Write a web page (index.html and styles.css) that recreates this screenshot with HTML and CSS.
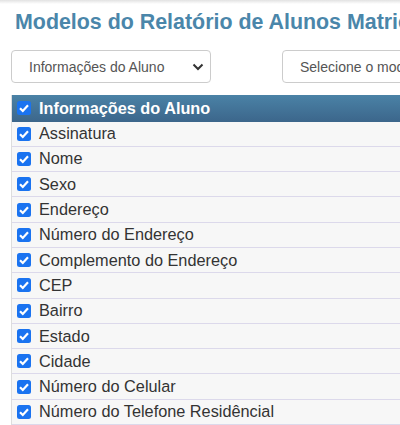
FILE: index.html
```html
<!DOCTYPE html>
<html lang="pt-BR">
<head>
<meta charset="utf-8">
<link rel="stylesheet" href="styles.css">
</head>
<body>
<div class="topshadow"></div>
<main class="page">
  <h1 class="title">Modelos do Relatório de Alunos Matriculados</h1>
  <div class="filters">
    <div class="select sel-a"><span>Informações do Aluno</span>
      <svg width="12" height="8" viewBox="0 0 12 8"><path d="M1.5 1.5 L6 6 L10.5 1.5" fill="none" stroke="#333" stroke-width="2"/></svg>
    </div>
    <div class="select sel-b"><span>Selecione o modelo</span>
      <svg width="12" height="8" viewBox="0 0 12 8"><path d="M1.5 1.5 L6 6 L10.5 1.5" fill="none" stroke="#333" stroke-width="2"/></svg>
    </div>
  </div>
  <div class="table">
    <div class="head"><svg class="cb" viewBox="0 0 14 14"><rect x="0" y="0" width="14" height="14" rx="2.5" fill="#1a73f0"/><path d="M3 7.2 L5.8 10 L11 4.2" fill="none" stroke="#fff" stroke-width="2.2"/></svg><span>Informações do Aluno</span></div>
    <div class="row"><svg class="cb" viewBox="0 0 14 14"><rect x="0" y="0" width="14" height="14" rx="2.5" fill="#1a73f0"/><path d="M3 7.2 L5.8 10 L11 4.2" fill="none" stroke="#fff" stroke-width="2.2"/></svg><span>Assinatura</span></div>
    <div class="row"><svg class="cb" viewBox="0 0 14 14"><rect x="0" y="0" width="14" height="14" rx="2.5" fill="#1a73f0"/><path d="M3 7.2 L5.8 10 L11 4.2" fill="none" stroke="#fff" stroke-width="2.2"/></svg><span>Nome</span></div>
    <div class="row"><svg class="cb" viewBox="0 0 14 14"><rect x="0" y="0" width="14" height="14" rx="2.5" fill="#1a73f0"/><path d="M3 7.2 L5.8 10 L11 4.2" fill="none" stroke="#fff" stroke-width="2.2"/></svg><span>Sexo</span></div>
    <div class="row"><svg class="cb" viewBox="0 0 14 14"><rect x="0" y="0" width="14" height="14" rx="2.5" fill="#1a73f0"/><path d="M3 7.2 L5.8 10 L11 4.2" fill="none" stroke="#fff" stroke-width="2.2"/></svg><span>Endereço</span></div>
    <div class="row"><svg class="cb" viewBox="0 0 14 14"><rect x="0" y="0" width="14" height="14" rx="2.5" fill="#1a73f0"/><path d="M3 7.2 L5.8 10 L11 4.2" fill="none" stroke="#fff" stroke-width="2.2"/></svg><span>Número do Endereço</span></div>
    <div class="row"><svg class="cb" viewBox="0 0 14 14"><rect x="0" y="0" width="14" height="14" rx="2.5" fill="#1a73f0"/><path d="M3 7.2 L5.8 10 L11 4.2" fill="none" stroke="#fff" stroke-width="2.2"/></svg><span>Complemento do Endereço</span></div>
    <div class="row"><svg class="cb" viewBox="0 0 14 14"><rect x="0" y="0" width="14" height="14" rx="2.5" fill="#1a73f0"/><path d="M3 7.2 L5.8 10 L11 4.2" fill="none" stroke="#fff" stroke-width="2.2"/></svg><span>CEP</span></div>
    <div class="row"><svg class="cb" viewBox="0 0 14 14"><rect x="0" y="0" width="14" height="14" rx="2.5" fill="#1a73f0"/><path d="M3 7.2 L5.8 10 L11 4.2" fill="none" stroke="#fff" stroke-width="2.2"/></svg><span>Bairro</span></div>
    <div class="row"><svg class="cb" viewBox="0 0 14 14"><rect x="0" y="0" width="14" height="14" rx="2.5" fill="#1a73f0"/><path d="M3 7.2 L5.8 10 L11 4.2" fill="none" stroke="#fff" stroke-width="2.2"/></svg><span>Estado</span></div>
    <div class="row"><svg class="cb" viewBox="0 0 14 14"><rect x="0" y="0" width="14" height="14" rx="2.5" fill="#1a73f0"/><path d="M3 7.2 L5.8 10 L11 4.2" fill="none" stroke="#fff" stroke-width="2.2"/></svg><span>Cidade</span></div>
    <div class="row"><svg class="cb" viewBox="0 0 14 14"><rect x="0" y="0" width="14" height="14" rx="2.5" fill="#1a73f0"/><path d="M3 7.2 L5.8 10 L11 4.2" fill="none" stroke="#fff" stroke-width="2.2"/></svg><span>Número do Celular</span></div>
    <div class="row"><svg class="cb" viewBox="0 0 14 14"><rect x="0" y="0" width="14" height="14" rx="2.5" fill="#1a73f0"/><path d="M3 7.2 L5.8 10 L11 4.2" fill="none" stroke="#fff" stroke-width="2.2"/></svg><span>Número do Telefone Residêncial</span></div>
  </div>
</main>
</body>
</html>
```
FILE: styles.css
```css
html, body {
  margin: 0;
  padding: 0;
  background: #fff;
  overflow: hidden;
  font-family: "Liberation Sans", Arial, sans-serif;
}
.topshadow {
  height: 4px;
  background: linear-gradient(to bottom, #e2e2e2, #ffffff);
}
.page {
  padding-left: 11px;
  width: 600px;
}
.title {
  margin: 6px 0 0 4px;
  font-size: 21.4px;
  font-weight: bold;
  color: #4a86aa;
  white-space: nowrap;
  line-height: 25px;
}
.filters {
  display: flex;
  gap: 71px;
  margin-top: 15px;
}
.select {
  box-sizing: border-box;
  height: 33px;
  border: 1px solid #cccccc;
  border-radius: 4px;
  display: flex;
  align-items: center;
  justify-content: space-between;
  font-size: 14px;
  color: #555;
  background: #fff;
}
.sel-a {
  width: 200px;
  padding: 0 6px 0 17px;
}
.sel-b {
  width: 260px;
  padding: 0 10px 0 17px;
}
.table {
  margin-top: 12px;
  border-left: 1px solid #dddddd;
}
.head {
  height: 26.5px;
  display: flex;
  align-items: center;
  background: linear-gradient(to bottom, #4a82a6, #3c668b);
  color: #fff;
  font-weight: bold;
  font-size: 16.3px;
}
.row {
  height: 24.3px;
  display: flex;
  align-items: center;
  background: #f7f7f7;
  border-bottom: 1px solid #dcd9eb;
  color: #333;
  font-size: 16.3px;
}
.cb {
  width: 14px;
  height: 14px;
  flex: none;
  margin: 0 8px 0 5px;
}
```
